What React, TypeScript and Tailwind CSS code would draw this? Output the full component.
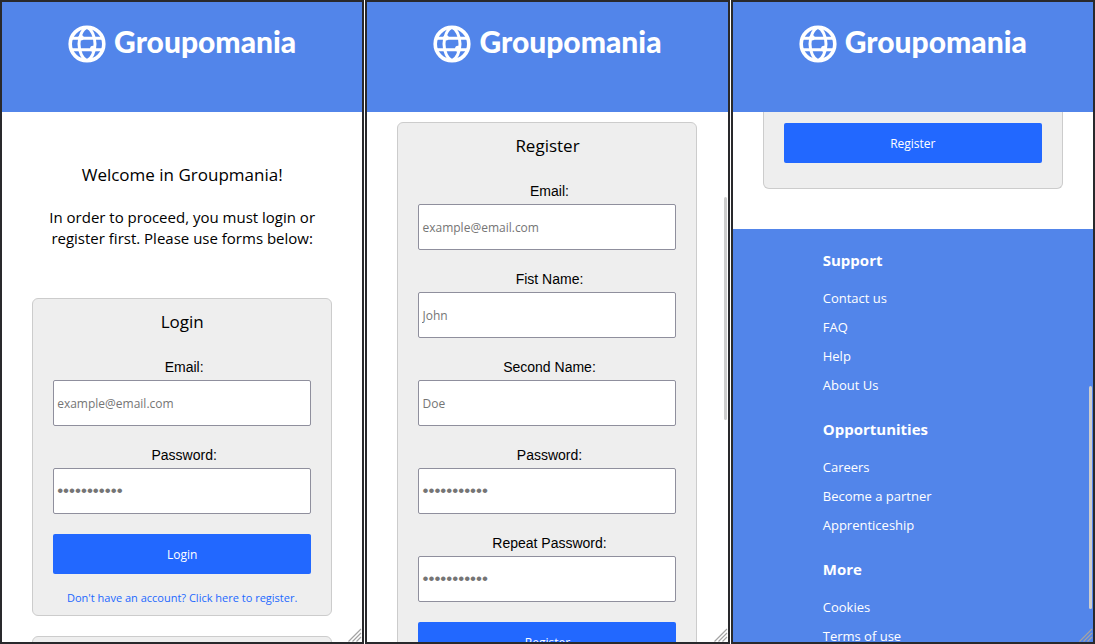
import { useId, type ReactNode } from 'react';

const DOTS = '•••••••••••';

function Logo() {
  return (
    <a href="#home" className="flex items-start gap-2 text-white">
      <svg viewBox="0 0 38 38" className="size-[38px]" fill="none" stroke="currentColor" strokeWidth="3" aria-hidden="true">
        <circle cx="19" cy="19" r="16.800" strokeWidth="3.600" />
        <path d="M4 13.200h30M4 24.800h30" />
        <path d="M19 2.400c-4.500 1.500-8 9-8 16.600s3.500 15 8 16.600M19 2.400c4.500 1.500 8 9 8 16.600s-3.500 15-8 16.600" />
        <circle cx="13" cy="12.800" r="2.700" fill="currentColor" stroke="none" />
        <circle cx="25" cy="23.800" r="3" fill="currentColor" stroke="none" />
      </svg>
      <span className="font-[Lato,sans-serif] text-[30px] leading-8 font-black">Groupomania</span>
    </a>
  );
}

function Grip() {
  return (
    <svg viewBox="0 0 14 14" className="absolute right-0 bottom-0 size-3.5" fill="none" stroke="#a3a3a3" strokeWidth="1.2" aria-hidden="true">
      <path d="M0.500 13.500 13 1M4.500 13.500 13 5M8.500 13.500 13 9" />
    </svg>
  );
}

function Screen({ children, thumb }: { children: ReactNode; thumb?: string }) {
  return (
    <section className="relative flex h-screen min-w-0 flex-col overflow-hidden border-2 border-[#29292c] bg-white">
      <header className="flex h-[110px] shrink-0 justify-center bg-[#5285ea] pt-[23px]">
        <div className="h-[38px]">
          <Logo />
        </div>
      </header>
      <main className="flex min-h-0 flex-1 flex-col overflow-hidden">{children}</main>
      {thumb && <div className={`absolute right-px h-[223px] w-[3px] rounded-sm bg-[#cdcdcd] ${thumb}`} />}
      <Grip />
    </section>
  );
}

function Field({ label, type = 'text', placeholder }: { label: string; type?: string; placeholder: string }) {
  const id = useId();
  const font = type === 'password' ? "font-['Liberation_Sans',sans-serif] text-[17px]" : 'text-[12px]';
  return (
    <div className="mb-5">
      <label htmlFor={id} className="mb-1 block pl-1 text-center font-['Liberation_Sans',sans-serif] text-[14px] leading-[18px]">
        {label}
      </label>
      <input
        id={id}
        type={type}
        placeholder={placeholder}
        className={`block h-[46px] w-full rounded-xs border border-[#8f8f9d] bg-white px-[3px] placeholder:text-[#757575] ${font}`}
      />
    </div>
  );
}

function Submit({ children }: { children: ReactNode }) {
  return (
    <button type="submit" className="block h-10 w-full rounded-xs bg-[#2268ff] pt-0.5 text-[12px] text-white">
      {children}
    </button>
  );
}

const CARD = 'mx-auto w-full max-w-[300px] shrink-0 border-[#cccccc] bg-[#eeeeee] px-5';

function FormTitle({ children }: { children: ReactNode }) {
  return <h2 className="mb-6 text-center text-[17px] leading-6">{children}</h2>;
}

const LINKS = [
  { title: 'Support', items: ['Contact us', 'FAQ', 'Help', 'About Us'] },
  { title: 'Opportunities', items: ['Careers', 'Become a partner', 'Apprenticeship'] },
  { title: 'More', items: ['Cookies', 'Terms of use'] },
];

export default function App() {
  return (
    <div className="grid grid-cols-3 gap-px bg-white font-['Open_Sans',sans-serif] text-black">
      <Screen>
        <div className="mt-[51px] mb-[49px] text-center">
          <h1 className="text-[17px] leading-6">Welcome in Groupmania!</h1>
          <p className="mx-auto mt-5 max-w-[300px] text-[15px] leading-[21px]">
            In order to proceed, you must login or register first. Please use forms below:
          </p>
        </div>
        <form className={`${CARD} rounded-md border pt-[11px] pb-2`}>
          <FormTitle>Login</FormTitle>
          <Field label="Email:" type="email" placeholder="example@email.com" />
          <Field label="Password:" type="password" placeholder={DOTS} />
          <Submit>Login</Submit>
          <a href="#register" className="mt-[15px] block text-center text-[11px] leading-[18px] text-[#2268ff]">
            Don't have an account? Click here to register.
          </a>
        </form>
        <div className={`${CARD} mt-5 h-10 rounded-t-md border`} />
      </Screen>

      <Screen thumb="top-[195px]">
        <form className={`${CARD} mt-2.5 rounded-md border pt-[11px] pb-[25px]`}>
          <FormTitle>Register</FormTitle>
          <Field label="Email:" type="email" placeholder="example@email.com" />
          <Field label="Fist Name:" placeholder="John" />
          <Field label="Second Name:" placeholder="Doe" />
          <Field label="Password:" type="password" placeholder={DOTS} />
          <Field label="Repeat Password:" type="password" placeholder={DOTS} />
          <Submit>Register</Submit>
        </form>
      </Screen>

      <Screen thumb="top-[384px]">
        <form className={`${CARD} rounded-b-md border border-t-0 pt-[11px] pb-[25px]`}>
          <Submit>Register</Submit>
        </form>
        <footer className="mt-10 flex flex-1 flex-col gap-[19px] bg-[#5285ea] pt-[21px] pl-[25%] text-white">
          {LINKS.map((group) => (
            <nav key={group.title} aria-label={group.title} className="shrink-0">
              <h3 className="mb-3.5 text-[15px] leading-5 font-bold">{group.title}</h3>
              <ul>
                {group.items.map((item) => (
                  <li key={item} className="text-[13px] leading-[29px]">
                    <a href="#footer">{item}</a>
                  </li>
                ))}
              </ul>
            </nav>
          ))}
        </footer>
      </Screen>
    </div>
  );
}
